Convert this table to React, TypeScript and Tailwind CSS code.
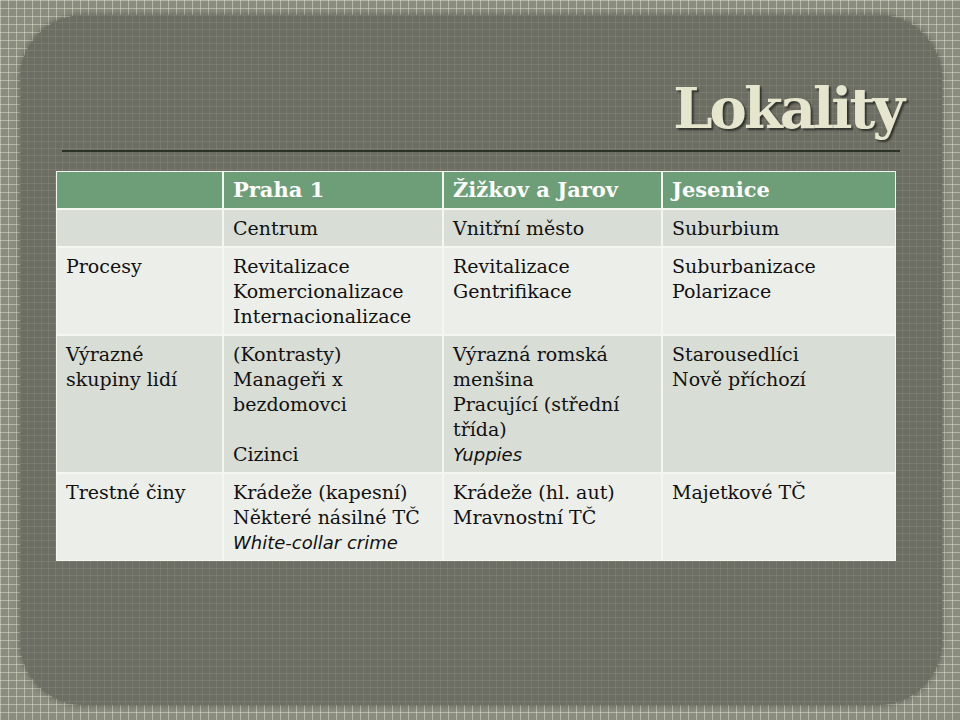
const serif = { fontFamily: '"DejaVu Serif", "Liberation Serif", serif' };

type Line = { t: string; i?: boolean };

const rows: { label: string[]; cells: Line[][]; shade: string }[] = [
  {
    label: ["Procesy"],
    cells: [
      [{ t: "Revitalizace" }, { t: "Komercionalizace" }, { t: "Internacionalizace" }],
      [{ t: "Revitalizace" }, { t: "Gentrifikace" }],
      [{ t: "Suburbanizace" }, { t: "Polarizace" }],
    ],
    shade: "bg-[#eceeea]",
  },
  {
    label: ["Výrazné", "skupiny lidí"],
    cells: [
      [{ t: "(Kontrasty)" }, { t: "Manageři x" }, { t: "bezdomovci" }, { t: "\u00a0" }, { t: "Cizinci" }],
      [
        { t: "Výrazná romská" },
        { t: "menšina" },
        { t: "Pracující (střední" },
        { t: "třída)" },
        { t: "Yuppies", i: true },
      ],
      [{ t: "Starousedlíci" }, { t: "Nově příchozí" }],
    ],
    shade: "bg-[#d8ddd5]",
  },
  {
    label: ["Trestné činy"],
    cells: [
      [{ t: "Krádeže (kapesní)" }, { t: "Některé násilné TČ" }, { t: "White-collar crime", i: true }],
      [{ t: "Krádeže (hl. aut)" }, { t: "Mravnostní TČ" }],
      [{ t: "Majetkové TČ" }],
    ],
    shade: "bg-[#eceeea]",
  },
];

function Cell({ lines, shade }: { lines: Line[]; shade: string }) {
  return (
    <div className={`${shade} px-[9px] pt-[6px] pb-[5px] text-[19px] leading-[25px] text-[#111] whitespace-nowrap`}>
      {lines.map((l, k) =>
        l.i ? (
          <div key={k} className="italic h-[25px]" style={{ fontFamily: '"DejaVu Sans", Verdana, sans-serif', fontSize: 18 }}>
            {l.t}
          </div>
        ) : (
          <div key={k} className="h-[25px]">{l.t}</div>
        )
      )}
    </div>
  );
}

export default function App() {
  return (
    <div
      className="w-[960px] h-[720px] pt-[15px] pl-[20px] bg-[#8b8d80] bg-[linear-gradient(rgba(235,235,215,0.45)_1px,transparent_1px),linear-gradient(90deg,rgba(235,235,215,0.45)_1px,transparent_1px)] bg-size-[8px_8px]"
      style={serif}
    >
      <div className="w-[922px] h-[690px] rounded-[64px] bg-[#6c6e63] bg-[linear-gradient(rgba(200,200,180,0.12)_1px,transparent_1px),linear-gradient(90deg,rgba(200,200,180,0.12)_1px,transparent_1px)] bg-size-[7px_7px] shadow-[0_0_6px_rgba(0,0,0,0.35)] flex flex-col">
        <div className="flex justify-end pr-[40px] pt-[65px] h-[135px]">
          <h1 className="text-[56px] leading-none font-bold tracking-[-3px] text-[#e6e6cf] [text-shadow:2px_2px_2px_rgba(0,0,0,0.55)]">
            Lokality
          </h1>
        </div>
        <div className="ml-[42px] mr-[42px] h-[2px] bg-[#2a3328]" />
        <div className="ml-[36px] mt-[19px] w-[840px] bg-[#f4f6f2] p-[1px] grid grid-cols-[165px_218px_217px_232px] gap-[2px]">
          <div className="bg-[#6d9e77]" />
          {["Praha 1", "Žižkov a Jarov", "Jesenice"].map((h) => (
            <div key={h} className="bg-[#6d9e77] px-[9px] py-[6px] text-[21px] leading-[24px] font-bold text-white whitespace-nowrap">
              {h}
            </div>
          ))}
          <div className="bg-[#d8ddd5]" />
          {["Centrum", "Vnitřní město", "Suburbium"].map((c) => (
            <Cell key={c} lines={[{ t: c }]} shade="bg-[#d8ddd5]" />
          ))}
          {rows.map((r) => (
            <div key={r.label[0]} className="contents">
              <Cell lines={r.label.map((t) => ({ t }))} shade={r.shade} />
              {r.cells.map((c, j) => (
                <Cell key={j} lines={c} shade={r.shade} />
              ))}
            </div>
          ))}
        </div>
      </div>
    </div>
  );
}
